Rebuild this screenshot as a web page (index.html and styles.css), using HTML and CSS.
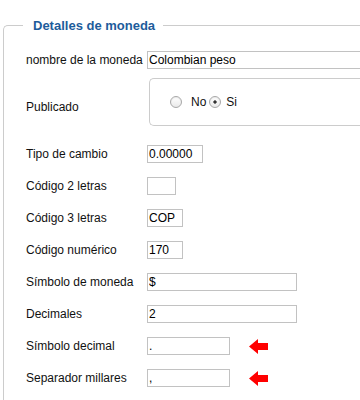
FILE: index.html
```html
<!DOCTYPE html>
<html lang="es">
<head>
  <meta charset="UTF-8">
  <title>Detalles de moneda</title>
  <link rel="stylesheet" href="styles.css">
</head>
<body>
  <fieldset class="panel">
    <legend>Detalles de moneda</legend>

    <div class="row">
      <label for="nombre">nombre de la moneda</label>
      <input type="text" id="nombre" class="field field-long" value="Colombian peso">
    </div>

    <div class="row row-radio">
      <label class="label-low">Publicado</label>
      <div class="radio-box">
        <input type="radio" id="pub-no" name="publicado" value="0">
        <label for="pub-no" class="radio-text">No</label>
        <input type="radio" id="pub-si" name="publicado" value="1" checked>
        <label for="pub-si" class="radio-text">Si</label>
      </div>
    </div>

    <div class="row">
      <label for="cambio">Tipo de cambio</label>
      <input type="text" id="cambio" class="field field-rate" value="0.00000">
    </div>

    <div class="row">
      <label for="cod2">Código 2 letras</label>
      <input type="text" id="cod2" class="field field-xs" value="">
    </div>

    <div class="row">
      <label for="cod3">Código 3 letras</label>
      <input type="text" id="cod3" class="field field-sm" value="COP">
    </div>

    <div class="row">
      <label for="numerico">Código numérico</label>
      <input type="text" id="numerico" class="field field-sm" value="170">
    </div>

    <div class="row">
      <label for="simbolo">Símbolo de moneda</label>
      <input type="text" id="simbolo" class="field field-wide" value="$">
    </div>

    <div class="row">
      <label for="decimales">Decimales</label>
      <input type="text" id="decimales" class="field field-wide" value="2">
    </div>

    <div class="row">
      <label for="sdecimal">Símbolo decimal</label>
      <input type="text" id="sdecimal" class="field field-md" value=".">
      <svg class="arrow" width="19" height="15" viewBox="0 0 19 15"><polygon points="0,7.5 9,0 9,4 19,4 19,11 9,11 9,15" fill="#ff0000"/></svg>
    </div>

    <div class="row row-last">
      <label for="millares">Separador millares</label>
      <input type="text" id="millares" class="field field-md" value=",">
      <svg class="arrow" width="19" height="15" viewBox="0 0 19 15"><polygon points="0,7.5 9,0 9,4 19,4 19,11 9,11 9,15" fill="#ff0000"/></svg>
    </div>
  </fieldset>
</body>
</html>
```

FILE: styles.css
```css
body {
  margin: 0;
  background-color: white;
  font-family: "Liberation Sans", Arial, sans-serif;
  font-size: 12px;
  color: #111;
}

/* the panel runs off the right and bottom edges in the original, so those borders are left out */
.panel {
  margin: 18px 0 0 3px;
  padding: 18px 0 0 22px;
  height: 382px;
  min-width: 0;
  border: 1px solid #cccccc;
  border-right: none;
  border-bottom: none;
  border-radius: 5px 0 0 0;
  box-sizing: border-box;
}

.panel legend {
  margin-left: -3px;
  padding: 0 8px 0 10px;
  font-size: 13px;
  line-height: 15px;
  font-weight: bold;
  color: #1d5c9b;
}

.row {
  display: flex;
  align-items: flex-start;
  height: 18px;
  margin-bottom: 14px;
}

.row-last {
  margin-bottom: 0;
}

.row > label {
  width: 121px;
  flex-shrink: 0;
  line-height: 18px;
}

.row-radio {
  height: 48px;
  margin-top: -5px;
  margin-bottom: 19px;
}

.label-low {
  margin-top: 20px;
}

.field {
  height: 18px;
  box-sizing: border-box;
  border: 1px solid #c2c2c2;
  padding: 0 1px;
  margin: 0;
  font-family: "Liberation Sans", Arial, sans-serif;
  font-size: 12px;
  color: #000;
  background: white;
}

.field-long {
  flex: 1;
  min-width: 0;
  border-right: none;
}

.field-wide { width: 150px; }
.field-md { width: 83px; }
.field-rate { width: 56px; }
.field-sm { width: 36px; }
.field-xs { width: 29px; }

.radio-box {
  display: flex;
  align-items: center;
  flex: 1;
  height: 48px;
  margin-left: 2px;
  padding-left: 20px;
  border: 1px solid #cccccc;
  border-right: none;
  border-radius: 5px 0 0 5px;
  box-sizing: border-box;
}

.radio-box input[type="radio"] {
  appearance: none;
  -webkit-appearance: none;
  width: 12px;
  height: 12px;
  margin: 0;
  border: 1px solid #a8a8a8;
  border-radius: 50%;
  background: linear-gradient(#ffffff, #e9e9e9);
  box-shadow: inset 0 1px 1px rgba(0, 0, 0, 0.08);
}

.radio-box input[type="radio"]:checked {
  background: radial-gradient(circle, #333 0, #333 1.3px, transparent 2px), linear-gradient(#ffffff, #e9e9e9);
}

.radio-text {
  margin: 0 3px 0 9px;
  line-height: 18px;
}

.radio-text:last-child {
  margin-left: 5px;
}

.arrow {
  margin: 2px 0 0 19px;
}
```
